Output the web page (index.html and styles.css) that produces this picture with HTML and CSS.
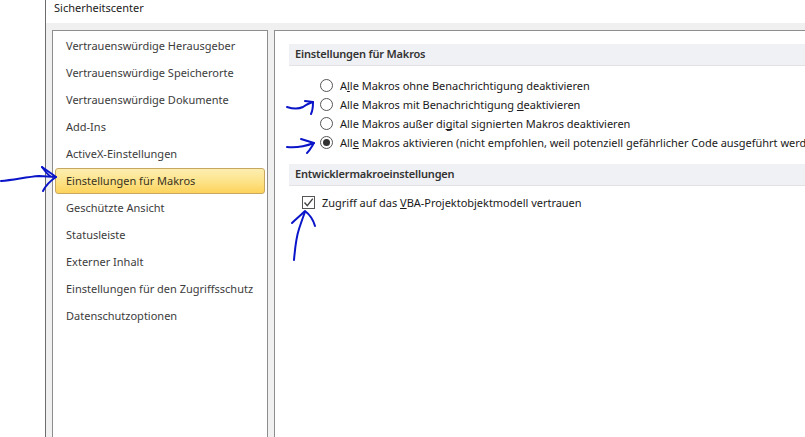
FILE: index.html
```html
<!DOCTYPE html>
<html lang="de">
<head>
<meta charset="utf-8">
<title>Sicherheitscenter</title>
<link rel="stylesheet" href="styles.css">
</head>
<body>
<div class="window">
  <div class="titlebar">Sicherheitscenter</div>
  <div class="body">
    <nav class="nav">
      <div class="nav-item">Vertrauenswürdige Herausgeber</div>
      <div class="nav-item">Vertrauenswürdige Speicherorte</div>
      <div class="nav-item">Vertrauenswürdige Dokumente</div>
      <div class="nav-item">Add-Ins</div>
      <div class="nav-item">ActiveX-Einstellungen</div>
      <div class="nav-item selected">Einstellungen für Makros</div>
      <div class="nav-item">Geschützte Ansicht</div>
      <div class="nav-item">Statusleiste</div>
      <div class="nav-item">Externer Inhalt</div>
      <div class="nav-item">Einstellungen für den Zugriffsschutz</div>
      <div class="nav-item">Datenschutzoptionen</div>
    </nav>
    <main class="content">
      <h2 class="section-head">Einstellungen für Makros</h2>
      <div class="radios">
        <div class="option"><span class="radio"></span><span>A<u>l</u>le Makros ohne Benachrichtigung deaktivieren</span></div>
        <div class="option"><span class="radio"></span><span>Alle Makros mit Benachrichtigung <u>d</u>eaktivieren</span></div>
        <div class="option"><span class="radio"></span><span>Alle Makros außer di<u>g</u>ital signierten Makros deaktivieren</span></div>
        <div class="option"><span class="radio checked"></span><span>All<u>e</u> Makros aktivieren (nicht empfohlen, weil potenziell gefährlicher Code ausgeführt werden kann)</span></div>
      </div>
      <h2 class="section-head second">Entwicklermakroeinstellungen</h2>
      <div class="check-row">
        <span class="checkbox"><svg width="11" height="11" viewBox="0 0 11 11"><path d="M1.5 5.5 L4.3 8.6 L9.8 1.6" fill="none" stroke="#444" stroke-width="1.4"/></svg></span>
        <span>Zugriff auf das <u>V</u>BA-Projektobjektmodell vertrauen</span>
      </div>
    </main>
  </div>
</div>
<svg class="ink" width="805" height="437" viewBox="0 0 805 437" fill="none" stroke="#0a14c8" stroke-width="2" stroke-linecap="round" stroke-linejoin="round">
  <path d="M1 181 C14 180 26 177 39 176 L56 177"/>
  <path d="M42 167 C46 170 51 173 56 177 C50 181 46 185 43 191"/>
  <path d="M42 167 C45 171 47 174 50 176"/>
  <path d="M287 107 C293 109 299 109 303 107 C306 105 309 103 313 102"/>
  <path d="M305 101 L313 102 C313 106 313 110 311 114"/>
  <path d="M287 147 C296 148 306 146 314 143 C312 146 310 150 307 153"/>
  <path d="M301 139 L314 143"/>
  <path d="M294 260 C295 248 296 238 299 229 C301 223 303 217 305 212"/>
  <path d="M292 223 C296 219 301 215 305 211 C309 214 313 219 315 226"/>
</svg>
</body>
</html>
```
FILE: styles.css
```css
html, body {
  margin: 0;
  padding: 0;
  width: 805px;
  height: 437px;
  overflow: hidden;
  background: #ffffff;
}
body {
  position: relative;
  font-family: "Noto Sans", "Open Sans", sans-serif;
  font-size: 11px;
  color: #262626;
}
u {
  text-decoration-skip-ink: none;
}
.window {
  margin-left: 45px;
  width: 760px;
  height: 437px;
  border-left: 1px solid #6d6d6d;
  display: flex;
  flex-direction: column;
  box-sizing: border-box;
}
.titlebar {
  height: 23px;
  flex: none;
  padding-left: 8px;
  line-height: 15px;
  background: #fff;
  color: #1a1a1a;
  box-sizing: border-box;
}
.body {
  flex: 1;
  display: flex;
  gap: 6px;
  padding: 7px 0 0 6px;
  background: #f0f0f0;
  min-height: 0;
}
.nav {
  width: 216px;
  flex: none;
  box-sizing: border-box;
  border: 1px solid #8e8e8e;
  border-bottom: 0;
  background: #fff;
  padding: 2px 2px 0;
  display: flex;
  flex-direction: column;
}
.nav-item {
  height: 27px;
  line-height: 26px;
  padding: 0 0 0 11px;
  color: #3c3c3c;
  white-space: nowrap;
  box-sizing: border-box;
}
.nav-item.selected {
  height: 26px;
  margin-bottom: 1px;
  line-height: 24px;
  border: 1px solid #c8a860;
  border-radius: 3px;
  padding-left: 10px;
  background: linear-gradient(#fdeeb0 0%, #fde58f 45%, #fdd35c 100%);
  color: #3a3320;
}
.content {
  flex: 1;
  min-width: 0;
  box-sizing: border-box;
  border: 1px solid #8e8e8e;
  border-right: 0;
  border-bottom: 0;
  background: #fff;
  padding: 13px 0 0 14px;
  overflow: hidden;
}
.section-head {
  margin: 0;
  height: 22px;
  padding-left: 6px;
  line-height: 20px;
  font-size: 11px;
  font-weight: 600;
  letter-spacing: -0.18px;
  color: #333;
  background: #f0f1f4;
  border-bottom: 1px solid #e2e2e2;
  box-sizing: border-box;
}
.second { margin-top: 12px; }
.radios {
  padding: 10px 0 0 31px;
  display: flex;
  flex-direction: column;
  letter-spacing: -0.02px;
}
.option {
  height: 19px;
  display: flex;
  align-items: center;
  gap: 7px;
  white-space: nowrap;
  color: #1a1a1a;
}
.radio {
  width: 13px;
  height: 13px;
  flex: none;
  box-sizing: border-box;
  border: 1px solid #555;
  border-radius: 50%;
  background: #fff;
  display: flex;
  align-items: center;
  justify-content: center;
}
.radio.checked::after {
  content: "";
  width: 7px;
  height: 7px;
  border-radius: 50%;
  background: #333;
}
.check-row {
  padding: 9px 0 0 13px;
  display: flex;
  align-items: center;
  gap: 7px;
  white-space: nowrap;
  color: #1a1a1a;
  letter-spacing: -0.02px;
}
.checkbox {
  width: 13px;
  height: 13px;
  flex: none;
  box-sizing: border-box;
  border: 1px solid #555;
  background: #fff;
  display: flex;
  align-items: center;
  justify-content: center;
}
.ink {
  position: absolute;
  left: 0;
  top: 0;
  pointer-events: none;
}
```
